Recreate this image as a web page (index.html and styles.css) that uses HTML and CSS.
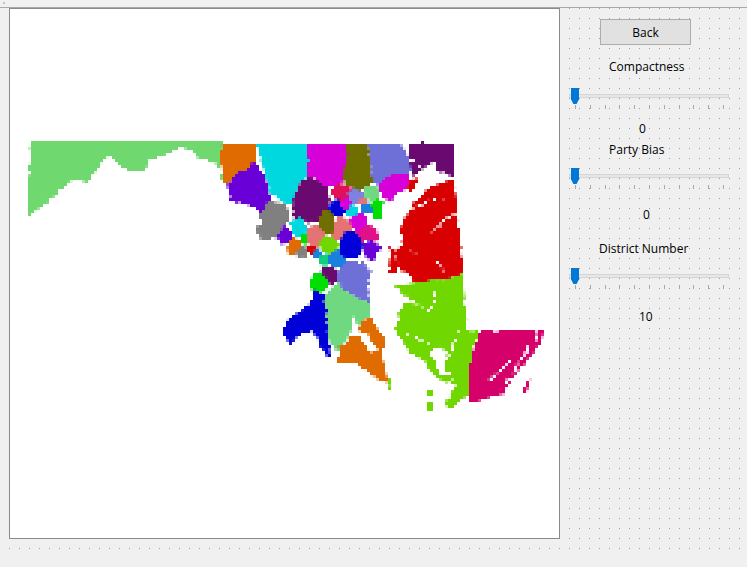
FILE: index.html
```html
<!DOCTYPE html>
<html lang="en">
<head>
    <meta charset="UTF-8">
    <meta name="viewport" content="width=device-width, initial-scale=1.0">
    <title>Districting</title>
    <link rel="stylesheet" href="styles.css">
</head>
<body>
    <div class="topbar"><span class="grip"></span></div>
    <div class="form">
        <div class="canvas">
            <svg class="map" viewBox="10 9 549 529" width="549" height="529">
                <defs>
                    <!-- rough coastline, then chunky cells like the source raster -->
                    <filter id="raster" filterUnits="userSpaceOnUse" x="10" y="9" width="549" height="529" color-interpolation-filters="sRGB">
                        <feTurbulence type="fractalNoise" baseFrequency="0.14" numOctaves="2" seed="4" result="noise"/>
                        <feDisplacementMap in="SourceGraphic" in2="noise" scale="5" xChannelSelector="R" yChannelSelector="G" result="rough"/>
                        <feFlood x="11" y="10" width="1" height="1" flood-color="#000"/>
                        <feComposite x="10" y="9" width="3" height="3"/>
                        <feTile x="10" y="9" width="549" height="529" result="cells"/>
                        <feComposite in="rough" in2="cells" operator="in"/>
                        <feMorphology operator="dilate" radius="1"/>
                    </filter>
                    <clipPath id="state-top">
                        <rect x="10" y="141" width="549" height="397"/>
                    </clipPath>
                </defs>
                <g clip-path="url(#state-top)">
                <g filter="url(#raster)">
                    <!-- west -->
                    <polygon class="green" points="31,140 222,140 222,160 217,172 225,176 223,183 213,160 200,160 190,150 180,147 170,153 150,160 143,172 123,169 115,160 107,157 88,182 72,180 43,205 27,218"/>
                    <polygon class="orange" points="222,144 257,144 257,162 233,177 227,185 223,183 223,170 220,160"/>
                    <polygon class="violet" points="255,162 263,173 272,198 260,213 248,205 230,200 227,185 233,177"/>
                    <polygon class="cyan" points="257,144 308,144 308,177 300,182 292,203 285,204 270,193 263,167"/>
                    <polygon class="magenta" points="308,144 348,144 346,173 340,184 330,187 328,190 313,178 308,177"/>
                    <polygon class="olive" points="347,144 367,144 373,182 365,187 360,194 348,186 343,180 346,165"/>
                    <polygon class="slate" points="367,144 402,144 411,158 411,174 390,176 378,185 373,182"/>
                    <polygon class="plum" points="408,143 454,143 454,178 443,172 437,170 435,162 423,168 413,177 410,163"/>
                    <polygon class="magenta" points="378,184 390,175 411,173 408,188 398,193 390,203 382,195"/>
                    <!-- east shore -->
                    <polygon class="red" points="430,187 450,180 454,178 457,207 463,275 440,280 417,284 407,273 400,272 396,250 402,245 400,227 413,205 427,190"/>
                    <polygon class="red" points="409,178 420,180 410,192 408,186"/>
                    <polygon class="red" points="390,248 396,250 398,273 389,272"/>
                    <polygon class="lime" points="463,275 467,330 481,331 473,347 470,393 450,410 446,402 455,385 436,378 424,360 410,353 393,327 400,320 397,313 403,305 410,300 404,293 393,285 417,283 440,280"/>
                    <polygon class="lime" points="427,388 432,388 432,396 427,396"/>
                    <polygon class="lime" points="428,402 433,402 433,409 428,409"/>
                    <polygon class="pink" points="481,331 535,330 537,347 530,357 513,377 503,395 470,403 470,360"/>
                    <polygon class="pink" points="538,330 544,330 540,345 536,347"/>
                    <polygon class="pink" points="526,385 530,375 527,392 522,394"/>
                    <!-- center blobs -->
                    <polygon class="plum" points="310,177 328,188 330,200 328,213 320,220 307,223 293,217 292,202 300,183"/>
                    <polygon class="gray" points="260,212 268,202 283,203 290,210 289,220 282,227 278,238 262,240 254,228 262,223"/>
                    <polygon class="cyan" points="290,222 300,217 308,227 305,235 295,237 290,230"/>
                    <polygon class="violet" points="277,237 283,225 293,232 292,240 283,245"/>
                    <polygon class="orange" points="287,247 292,237 302,242 298,253 288,255"/>
                    <circle class="gray" cx="302" cy="252" r="6"/>
                    <circle class="bright" cx="305" cy="240" r="5"/>
                    <circle class="red" cx="312" cy="250" r="5"/>
                    <polygon class="salmon" points="307,228 318,224 326,237 318,248 310,245 306,237"/>
                    <polygon class="salmon" points="330,227 340,216 352,222 352,232 342,241 331,238"/>
                    <ellipse class="olive" cx="327" cy="222" rx="8" ry="12"/>
                    <circle class="lime" cx="329" cy="245" r="9"/>
                    <circle class="sky" cx="318" cy="254" r="5"/>
                    <polygon class="slate" points="345,262 363,262 372,273 367,287 370,303 352,295 338,283 337,273"/>
                    <circle class="sea" cx="325" cy="260" r="6"/>
                    <circle class="sky" cx="337" cy="259" r="9"/>
                    <ellipse class="blue" cx="351" cy="245" rx="12" ry="14"/>
                    <circle class="blue" cx="338" cy="208" r="9"/>
                    <polygon class="rose" points="360,222 378,228 379,240 362,242 356,232"/>
                    <circle class="magenta" cx="358" cy="221" r="9"/>
                    <circle class="crimson" cx="341" cy="192" r="9"/>
                    <circle class="magenta" cx="347" cy="203" r="6"/>
                    <circle class="periwinkle" cx="356" cy="196" r="8"/>
                    <circle class="cyan" cx="352" cy="211" r="6"/>
                    <circle class="salmon" cx="363" cy="202" r="5"/>
                    <circle class="sky" cx="367" cy="209" r="6"/>
                    <circle class="mint" cx="372" cy="193" r="8"/>
                    <circle class="bright" cx="377" cy="205" r="6"/>
                    <circle class="bright" cx="378" cy="214" r="6"/>
                    <polygon class="violet" points="362,245 372,240 382,248 376,253 374,262 366,258"/>
                    <!-- south -->
                    <polygon class="blue" points="312,290 323,295 325,310 329,340 330,357 325,355 312,330 303,332 292,345 284,340 284,323 303,310 312,300"/>
                    <polygon class="mint" points="323,295 338,283 352,295 370,303 370,315 358,325 353,315 353,328 337,352 329,340 325,310"/>
                    <circle class="plum" cx="329" cy="275" r="9"/>
                    <circle class="bright" cx="319" cy="283" r="10"/>
                    <polygon class="orange" points="370,317 385,340 385,350 378,350 368,335 358,330 362,322"/>
                    <polygon class="orange" points="352,336 360,338 372,352 383,352 383,358 388,383 370,375 357,363 338,363 338,348"/>
                    <polygon class="lime" points="389,376 392,390 388,388"/>
                    <!-- water cuts -->
                    <g class="water">
                        <polyline points="402,145 410,158 422,168"/>
                        <polyline points="411,248 416,255"/>
                        <polyline points="432,232 447,217 460,212"/>
                        <polyline points="410,210 430,200 448,198"/>
                        <polyline points="435,260 445,272"/>
                        <polyline points="407,298 428,312 437,297 430,287"/>
                        <polyline points="405,333 420,340 430,345"/>
                        <polyline points="447,360 460,330"/>
                        <polyline points="443,385 456,378"/>
                        <polyline points="490,380 510,362"/>
                        <polyline points="505,385 530,345"/>
                        <polygon class="inlet" points="430,352 440,345 447,352 445,368 452,375 440,375"/>
                    </g>
                </g>
                </g>
            </svg>
        </div>
        <div class="panel">
            <button class="back-btn">Back</button>
            <div class="caption caption-compact">Compactness</div>
            <div class="slider slider-compact">
                <div class="groove"></div>
                <div class="thumb"></div>
                <div class="ticks">
                    <i></i><i></i><i></i><i></i><i></i><i></i><i></i><i></i><i></i><i></i><i></i>
                </div>
            </div>
            <div class="caption value-first">0</div>
            <div class="caption caption-party">Party Bias</div>
            <div class="slider slider-party">
                <div class="groove"></div>
                <div class="thumb"></div>
                <div class="ticks">
                    <i></i><i></i><i></i><i></i><i></i><i></i><i></i><i></i><i></i><i></i><i></i>
                </div>
            </div>
            <div class="caption value-second">0</div>
            <div class="caption caption-district">District Number</div>
            <div class="slider slider-district">
                <div class="groove"></div>
                <div class="thumb"></div>
                <div class="ticks">
                    <i></i><i></i><i></i><i></i><i></i><i></i><i></i><i></i><i></i><i></i><i></i>
                </div>
            </div>
            <div class="caption value-third">10</div>
        </div>
    </div>
</body>
</html>
```

FILE: styles.css
```css
html, body {
    margin: 0;
    height: 100%;
    overflow: hidden;
}
body {
    background-color: #f0f0f0;
    font-family: "Open Sans", "Noto Sans", Arial, sans-serif;
    font-size: 12px;
    color: #000;
}
.topbar {
    height: 8px;
    border-bottom: 1px solid #a8a8a8;
    padding: 2px 0 0 3px;
    box-sizing: border-box;
}
.grip {
    display: block;
    width: 2px;
    height: 2px;
    background: #c4c4c4;
}
/* design grid: a vertical line pattern masked down to single dots */
.form {
    display: flex;
    height: 541px;
    background-color: #f0f0f0;
    background-image:
        linear-gradient(to bottom, transparent 1px, #f0f0f0 1px),
        linear-gradient(to right, #9c9c9c 1px, transparent 1px);
    background-size: 10px 10px;
    background-position: 9px 0;
}
.canvas {
    width: 549px;
    height: 529px;
    margin-left: 9px;
    border: 1px solid #8a8a8a;
    background: #fff;
    flex-shrink: 0;
}
.map {
    display: block;
}
.panel {
    flex: 1;
    position: relative;
    padding-top: 11px;
    display: flex;
    flex-direction: column;
    align-items: flex-start;
}
.back-btn {
    width: 91px;
    height: 26px;
    margin-left: 40px;
    padding: 1px 0 0;
    background: #e1e1e1;
    border: 1px solid #adadad;
    font-family: inherit;
    font-size: 12px;
    color: #000;
}
.caption {
    height: 16px;
    line-height: 18px;
    white-space: nowrap;
}
.caption-compact { margin: 13px 0 0 49px; }
.caption-party { margin: 5px 0 0 49px; }
.caption-district { margin: 18px 0 0 39px; }
.value-first { margin: 10px 0 0 79px; }
.value-second { margin: 16px 0 0 83px; }
.value-third { margin: 18px 0 0 79px; }
.slider {
    position: relative;
    width: 160px;
    height: 22px;
    margin-left: 9px;
}
.slider-compact { margin-top: 14px; }
.slider-party { margin-top: 11px; }
.slider-district { margin-top: 12px; }
.groove {
    height: 2px;
    margin-top: 6px;
    background: #e7e7e7;
    border: 1px solid #d6d6d6;
}
.thumb {
    position: absolute;
    left: 2px;
    top: 0;
    width: 8px;
    height: 16px;
    background: #0078d7;
    clip-path: polygon(0 0, 100% 0, 100% 70%, 70% 100%, 30% 100%, 0 70%);
}
.ticks {
    position: absolute;
    left: 6px;
    top: 17px;
    width: 149px;
    display: flex;
    justify-content: space-between;
}
.ticks i {
    display: block;
    width: 1px;
    height: 4px;
    background: #a8a8a8;
}
.green { fill: #6fd96f; }
.orange { fill: #e06b00; }
.violet { fill: #6a00d8; }
.cyan { fill: #00d8e0; }
.magenta { fill: #d800d8; }
.olive { fill: #6f6f00; }
.slate { fill: #6f6fd8; }
.plum { fill: #6a0a70; }
.red { fill: #d80000; }
.lime { fill: #70d800; }
.pink { fill: #d6006a; }
.gray { fill: #808080; }
.blue { fill: #0000d8; }
.salmon { fill: #e57373; }
.bright { fill: #00e000; }
.sky { fill: #1a80e0; }
.sea { fill: #10d080; }
.rose { fill: #e0108a; }
.crimson { fill: #e0105a; }
.periwinkle { fill: #8080e0; }
.mint { fill: #70d880; }
.water polyline {
    fill: none;
    stroke: #fff;
    stroke-width: 1.5;
}
.water .inlet {
    fill: #fff;
}
```
